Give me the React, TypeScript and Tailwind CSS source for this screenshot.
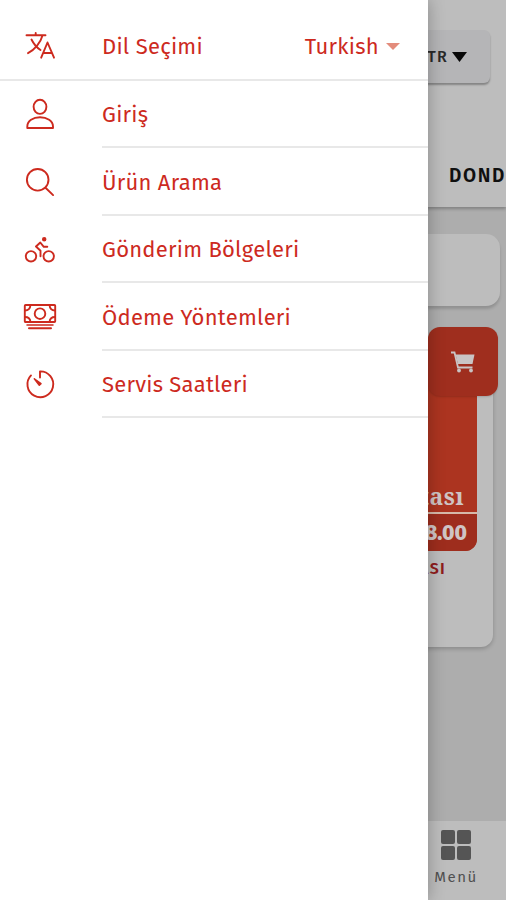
import type { ReactNode } from "react";

interface MenuItem {
  label: string;
  icon: ReactNode;
}

function Icon({ children }: { children: ReactNode }) {
  return (
    <svg
      viewBox="0 0 40 40"
      className="size-10 shrink-0"
      fill="none"
      stroke="currentColor"
      strokeWidth="1.9"
      strokeLinecap="round"
      strokeLinejoin="round"
    >
      {children}
    </svg>
  );
}

const translateIcon = (
  <Icon>
    <path d="M6.500 9.200H25.500M15.700 7V9M22.500 9.500C20.500 17 14.500 24 8 27.200M11.500 13.500C13.500 17.500 16.500 21.500 20.500 24" />
    <path d="M21.200 31.700l6.300-15.200L34 31.700M23.300 27h8.400" />
  </Icon>
);

const items: MenuItem[] = [
  {
    label: "Giriş",
    icon: (
      <Icon>
        <ellipse cx="20" cy="12.800" rx="6.400" ry="7.100" />
        <path d="M7.300 34v-1.500C7.300 27 13 23.200 20 23.200S33 27 33 32.500V34z" />
      </Icon>
    ),
  },
  {
    label: "Ürün Arama",
    icon: (
      <Icon>
        <circle cx="17.700" cy="17.800" r="10.800" />
        <path d="M25.500 25.700l7.600 7.400" />
      </Icon>
    ),
  },
  {
    label: "Gönderim Bölgeleri",
    icon: (
      <Icon>
        <circle cx="11" cy="27.300" r="5.200" />
        <circle cx="28.700" cy="27.300" r="5.200" />
        <circle cx="24.200" cy="10.200" r="1.300" fill="currentColor" />
        <path d="M27.300 17.800h-3.500l-3.500-4.300-4.300 4L20.500 21.800v5.500" />
      </Icon>
    ),
  },
  {
    label: "Ödeme Yöntemleri",
    icon: (
      <Icon>
        <rect x="4.800" y="8" width="30.400" height="17" rx="0.800" />
        <circle cx="20" cy="16.700" r="5.300" />
        <path d="M5 13.500q5 0 5.500-5.500M35 13.500q-5 0-5.500-5.500M5 20q5 0 5.500 5M35 20q-5 0-5.500 5" />
        <path d="M7 28h26" strokeWidth="1.500" />
        <path d="M9 31.200h22" strokeWidth="2" />
      </Icon>
    ),
  },
  {
    label: "Servis Saatleri",
    icon: (
      <Icon>
        <path d="M20 13.500V7.400a12.900 12.900 0 1 1-9 4" />
        <path d="M14.300 14.800L21 19.600l-1.700 1.700z" fill="currentColor" strokeWidth="1.500" />
      </Icon>
    ),
  },
];

function Drawer() {
  return (
    <aside className="absolute inset-y-0 left-0 w-[428px] bg-white text-[#cd2a1e] text-[22px] tracking-[0.25px] shadow-[0_0_16px_rgba(0,0,0,0.28)]">
      <div className="flex h-[80.5px] items-center border-b-2 border-[#e8e8e8] pl-5 pt-3.5">
        {translateIcon}
        <span className="ml-[42px] pt-px">Dil Seçimi</span>
        <span className="ml-auto pt-px">Turkish</span>
        <svg viewBox="0 0 14 7" className="ml-[7px] mr-7 h-[7px] w-3.5">
          <path d="M0 0h14L7 7z" fill="#e38c7c" />
        </svg>
      </div>
      <nav>
        {items.map((item) => (
          <a key={item.label} className="flex h-[67.5px] pl-5">
            <span className="flex items-center">{item.icon}</span>
            <span className="ml-[42px] flex flex-1 items-center border-b-2 border-[#e8e8e8] pt-[3px]">
              {item.label}
            </span>
          </a>
        ))}
      </nav>
    </aside>
  );
}

function ShopPage() {
  return (
    <div className="flex h-full flex-col bg-[#adadad]">
      <header className="flex h-[207px] shrink-0 flex-col items-end bg-[#bdbdbd] shadow-[0_2px_3px_rgba(0,0,0,0.25)]">
        <button className="mr-4 mt-[30px] flex h-[53px] w-28 items-center justify-end gap-1 rounded-md bg-[#b5b5b7] pr-[23px] text-base font-medium tracking-[1.2px] text-[#292929] shadow-[0_2px_2px_rgba(0,0,0,0.3)]">
          TR
          <svg viewBox="0 0 15 10" className="h-2.5 w-[15px]">
            <path d="M0 0h15L7.500 10z" fill="#080808" />
          </svg>
        </button>
        <div className="mt-[78px] w-[57px] overflow-hidden whitespace-nowrap text-[19px] leading-[30px] font-semibold tracking-[1.6px] text-[#101010]">
          DOND
        </div>
      </header>

      <div className="ml-1.5 mr-1.5 mt-[27px] h-[72px] shrink-0 rounded-[14px] bg-[#bdbdbd] shadow-[0_3px_3px_rgba(0,0,0,0.16)]" />

      {/* Product card */}
      <div className="relative ml-auto mr-[13px] mt-[34px] h-[307px] w-56 shrink-0 rounded-xl bg-[#bdbdbd] shadow-[0_2px_4px_rgba(0,0,0,0.2)]">
        <div className="ml-auto mr-4 flex h-[211px] w-48 flex-col overflow-hidden rounded-b-xl bg-[#ac3420] text-right text-[#cfc4c4]">
          <div className="flex flex-1 items-end justify-end border-b-2 border-[#d6b9a9] pr-[13px] font-['Noto_Serif','Liberation_Serif',serif] text-[23px] leading-8 font-bold tracking-[0.5px]">
            pastası
          </div>
          <div className="flex h-[37px] items-center justify-end bg-[#9e2d1d] pr-2.5 pt-0.5 text-[21px] font-extrabold">
            18.00
          </div>
        </div>
        <div className="mr-[47px] mt-1.5 text-right text-base leading-6 font-semibold tracking-[1.3px] text-[#8f1d1d]">
          PASTASI
        </div>
        <button className="absolute -top-[13px] -right-[5px] flex h-[69px] w-[70px] items-center justify-center rounded-xl bg-[#9f2e1e] shadow-[0_1px_2px_rgba(0,0,0,0.15)]">
          <svg viewBox="0 0 24 22" className="h-[22px] w-6" fill="none" stroke="#c9c4c4" strokeWidth="1.800">
            <path d="M0 1.500h3.500L7 16.500H21.500" />
            <path d="M4.500 3.500H23.500L21.500 13H7z" fill="#c9c4c4" stroke="none" />
            <circle cx="8" cy="19.500" r="1.900" fill="#c9c4c4" stroke="none" />
            <circle cx="20" cy="19.500" r="1.900" fill="#c9c4c4" stroke="none" />
          </svg>
        </button>
      </div>

      <footer className="mt-auto flex h-[79px] shrink-0 justify-end bg-[#bdbdbd]">
        <div className="flex w-[100px] flex-col items-center pt-[9px] text-[#505050]">
          <svg viewBox="0 0 30 30" className="size-[30px]" fill="#555555">
            <rect width="14" height="14" rx="2" />
            <rect x="16" width="14" height="14" rx="2" />
            <rect y="16" width="14" height="14" rx="2" />
            <rect x="16" y="16" width="14" height="14" rx="2" />
          </svg>
          <span className="mt-[5px] text-[15px] leading-6 tracking-[1.5px]">Menü</span>
        </div>
      </footer>
    </div>
  );
}

export default function App() {
  return (
    <div className="relative h-[900px] w-[506px] overflow-hidden font-['Fira_Sans','Noto_Sans',sans-serif]">
      <ShopPage />
      <Drawer />
    </div>
  );
}
